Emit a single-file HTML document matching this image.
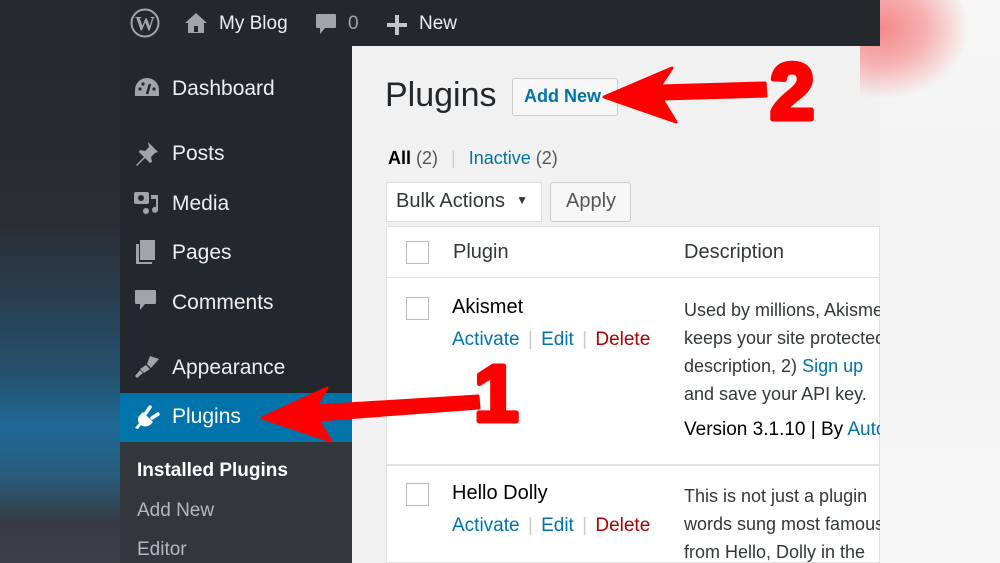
<!DOCTYPE html>
<html><head><meta charset="utf-8">
<style>
*{margin:0;padding:0;box-sizing:border-box}
body{width:1000px;height:563px;overflow:hidden;position:relative;font-family:"Liberation Sans",sans-serif;background:#f1f1f1}
.abs{position:absolute}
#lb{left:0;top:0;width:120px;height:563px;background:linear-gradient(180deg,#25282c 0%,#2a2e33 40%,#26506d 66%,#1f6a96 76%,#2a5a7a 85%,#363b41 93%,#3c4146 100%)}
#rb{left:880px;top:0;width:120px;height:563px;background:linear-gradient(180deg,#f6f6f6 0%,#f3f3f3 50%,#f7f7f7 100%)}
#rb .pink{left:-20px;top:-20px;width:110px;height:120px;background:radial-gradient(ellipse at 20% 40%,#f38a8a 0%,#f6b0b0 35%,rgba(246,246,246,0) 70%)}
#bar{left:120px;top:0;width:760px;height:46px;background:#23282d;color:#eee;font-size:19px}
#side{left:120px;top:46px;width:232px;height:517px;background:#23282d}
.mi{position:absolute;left:52px;color:#eee;font-size:21px}
.ic{position:absolute;left:14px}
#cur{left:120px;top:393px;width:232px;height:49px;background:#0073aa}
#sub{left:120px;top:442px;width:232px;height:121px;background:#32373c}
.sm{position:absolute;left:17px;font-size:19px;color:#b4b9be}
.t{position:absolute;white-space:nowrap}
.btn{position:absolute;border:1px solid #ccc;background:#f7f7f7;border-radius:3px}
.cb{position:absolute;width:23px;height:23px;border:1px solid #b4b9be;background:#fff}
.blue{color:#0073aa}.red{color:#a00}.sep{color:#ccc;margin:0 3px}
.act{font-size:19px}
</style></head><body>
<div id="lb" class="abs"></div>
<div id="rb" class="abs"><div class="abs pink"></div></div>

<div id="bar" class="abs">
  <svg class="abs" style="left:10px;top:8px" width="30" height="30" viewBox="0 0 30 30"><circle cx="15" cy="15" r="13.5" fill="none" stroke="#a0a5aa" stroke-width="2"/><text x="15" y="22" text-anchor="middle" font-family="Liberation Serif" font-weight="bold" font-size="20" fill="#a0a5aa">W</text></svg>
  <svg class="abs" style="left:64px;top:12px" width="24" height="22" viewBox="0 0 24 22"><path d="M12 1L1 11h3v10h16V11h3z" fill="#a0a5aa"/><rect x="10" y="14" width="4" height="6" fill="#23282d"/></svg>
  <div class="t" style="left:99px;top:13px">My Blog</div>
  <svg class="abs" style="left:195px;top:13px" width="22" height="24" viewBox="0 0 22 24"><path d="M2 1h18a1 1 0 0 1 1 1v12a1 1 0 0 1-1 1H10l-5 6v-6H2a1 1 0 0 1-1-1V2a1 1 0 0 1 1-1z" fill="#a0a5aa"/></svg>
  <div class="t" style="left:228px;top:13px;color:#a0a5aa">0</div>
  <svg class="abs" style="left:267px;top:15px" width="20" height="20" viewBox="0 0 20 20"><path d="M8 0h4v8h8v4h-8v8H8v-8H0V8h8z" fill="#c3c6c9"/></svg>
  <div class="t" style="left:299px;top:13px">New</div>
</div>

<div id="side" class="abs">
  <svg class="ic" style="top:31px" width="26" height="22" viewBox="0 0 26 22"><path d="M13 1A12 12 0 0 0 1 13v6h24v-6A12 12 0 0 0 13 1z" fill="#a0a5aa"/><path d="M13 17l3-10" stroke="#23282d" stroke-width="2.5"/><circle cx="6" cy="12" r="1.6" fill="#23282d"/><circle cx="9" cy="7" r="1.6" fill="#23282d"/><circle cx="20" cy="12" r="1.6" fill="#23282d"/></svg>
  <div class="mi" style="top:31px">Dashboard</div>
  <svg class="ic" style="top:94px" width="26" height="26" viewBox="0 0 26 26"><path d="M14 2l10 10-3 1-4 4 1 5-2 1-5-5-8 8-1-1 8-8-5-5 1-2 5 1 4-4z" fill="#a0a5aa"/></svg>
  <div class="mi" style="top:96px">Posts</div>
  <svg class="ic" style="top:143px" width="26" height="28" viewBox="0 0 26 28"><rect x="0" y="3" width="15" height="12" rx="2" fill="#a0a5aa"/><circle cx="7" cy="9" r="3" fill="#23282d"/><path d="M17 6h7v15a3 3 0 1 1-2-3V10h-5z" fill="#a0a5aa"/><circle cx="12" cy="22" r="3" fill="#a0a5aa"/></svg>
  <div class="mi" style="top:146px">Media</div>
  <svg class="ic" style="top:193px" width="24" height="26" viewBox="0 0 24 26"><rect x="6" y="1" width="15" height="20" fill="#a0a5aa"/><path d="M2 5h3v18h13v2H2z" fill="#a0a5aa"/></svg>
  <div class="mi" style="top:195px">Pages</div>
  <svg class="ic" style="top:243px" width="24" height="24" viewBox="0 0 24 24"><path d="M2 1h19a1 1 0 0 1 1 1v12a1 1 0 0 1-1 1H11l-5 6v-6H2a1 1 0 0 1-1-1V2a1 1 0 0 1 1-1z" fill="#a0a5aa"/></svg>
  <div class="mi" style="top:245px">Comments</div>
  <svg class="ic" style="top:308px" width="28" height="26" viewBox="0 0 28 26"><path d="M16 2l9 3-8 9-4-4z" fill="#a0a5aa"/><path d="M12 11l4 4-6 4-4-4z" fill="#a0a5aa"/><path d="M6 16l3 3-6 5-2-2z" fill="#a0a5aa"/></svg>
  <div class="mi" style="top:310px">Appearance</div>
</div>
<div id="cur" class="abs">
  <svg class="abs" style="left:14px;top:12px" width="26" height="26" viewBox="0 0 26 26"><path d="M16 2l-4 6M24 9l-6 4" stroke="#fff" stroke-width="3.5" stroke-linecap="round"/><path d="M9 7l10 10-3 3c-3 2-7 2-9 0l-3 4-3-1 4-5c-2-3-1-6 1-8z" fill="#fff"/></svg>
  <div class="abs" style="left:52px;top:12px;color:#fff;font-size:21px">Plugins</div>
</div>
<div id="sub" class="abs">
  <div class="sm" style="top:18px;color:#fff;font-weight:bold">Installed Plugins</div>
  <div class="sm" style="top:58px">Add New</div>
  <div class="sm" style="top:97px">Editor</div>
</div>

<div class="t" style="left:385px;top:76px;font-size:34px;color:#23282d">Plugins</div>
<div class="btn" style="left:512px;top:78px;width:106px;height:38px"></div>
<div class="t" style="left:524px;top:86px;font-size:18px;font-weight:bold;color:#0073aa">Add New</div>

<div class="t" style="left:388px;top:148px;font-size:18px;color:#555"><b style="color:#000">All</b> (2) &nbsp;<span class="sep">|</span>&nbsp; <span class="blue">Inactive</span> (2)</div>

<div class="abs" style="left:386px;top:182px;width:156px;height:40px;background:#fff;border:1px solid #ddd"></div>
<div class="t" style="left:396px;top:190px;font-size:20px;color:#32373c">Bulk Actions &nbsp;<span style="font-size:12px;position:relative;top:-3px">▼</span></div>
<div class="btn" style="left:550px;top:182px;width:81px;height:40px"></div>
<div class="t" style="left:566px;top:190px;font-size:20px;color:#555">Apply</div>

<div class="abs" style="left:386px;top:226px;width:494px;height:337px;background:#fff;border:1px solid #e1e1e1"></div>
<div class="abs" style="left:386px;top:277px;width:494px;height:1px;background:#e1e1e1"></div>
<div class="abs" style="left:386px;top:464px;width:494px;height:2px;background:#e1e1e1"></div>
<div class="cb" style="left:406px;top:241px"></div>
<div class="t" style="left:453px;top:241px;font-size:20px;color:#32373c">Plugin</div>
<div class="t" style="left:684px;top:241px;font-size:20px;color:#32373c">Description</div>

<div class="cb" style="left:406px;top:297px"></div>
<div class="t" style="left:452px;top:296px;font-size:20px;color:#000">Akismet</div>
<div class="t act" style="left:452px;top:329px"><span class="blue">Activate</span> <span class="sep">|</span> <span class="blue">Edit</span> <span class="sep">|</span> <span class="red">Delete</span></div>
<div class="abs" style="left:684px;top:296px;width:196px;height:130px;overflow:hidden;font-size:18px;line-height:28px;color:#32373c;white-space:nowrap">Used by millions, Akismet<br>keeps your site protected<br>description, 2) <span class="blue">Sign up</span><br>and save your API key.</div>
<div class="abs" style="left:684px;top:419px;width:196px;overflow:hidden;font-size:19px;color:#000;white-space:nowrap">Version 3.1.10 | By <span class="blue">Automattic</span></div>

<div class="cb" style="left:406px;top:483px"></div>
<div class="t" style="left:452px;top:482px;font-size:20px;color:#000">Hello Dolly</div>
<div class="t act" style="left:452px;top:515px"><span class="blue">Activate</span> <span class="sep">|</span> <span class="blue">Edit</span> <span class="sep">|</span> <span class="red">Delete</span></div>
<div class="abs" style="left:684px;top:482px;width:196px;height:81px;overflow:hidden;font-size:18px;line-height:28px;color:#32373c;white-space:nowrap">This is not just a plugin<br>words sung most famously<br>from Hello, Dolly in the</div>

<svg class="abs" style="left:0;top:0" width="1000" height="563" viewBox="0 0 1000 563">
  <path d="M262 418L327 388L316 406L478 396L479 408L318 420L331 441Z" fill="#f00" stroke="#f00" stroke-width="3" stroke-linejoin="round"/>
  <path d="M604 97L672 68L660 86L765 83L766 96L662 99L676 122Z" fill="#f00" stroke="#f00" stroke-width="3" stroke-linejoin="round"/>
  <text x="770" y="119" font-family="Liberation Sans" font-weight="bold" font-size="80" fill="#f00" stroke="#f00" stroke-width="5" stroke-linejoin="round">2</text>
  <text x="474" y="421" font-family="Liberation Sans" font-weight="bold" font-size="80" fill="#f00" stroke="#f00" stroke-width="5" stroke-linejoin="round">1</text>
</svg>
</body></html>
